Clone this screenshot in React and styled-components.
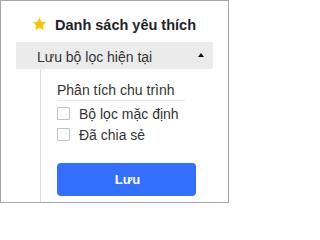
import React from "react";
import styled, { createGlobalStyle } from "styled-components";

const Global = createGlobalStyle`
  html, body { margin: 0; padding: 0; background: #fff; }
  * { box-sizing: border-box; }
`;

const Panel = styled.div`
  width: 229px;
  height: 203px;
  border: 1px solid #a6a6a6;
  background: #fff;
  font-family: "Liberation Sans", Arial, sans-serif;
  line-height: 16px;
  display: flex;
  flex-direction: column;
  overflow: hidden;
`;

const Header = styled.div`
  display: flex;
  align-items: flex-start;
  gap: 8px;
  height: 41px;
  flex-shrink: 0;
  padding: 16px 0 0 31px;
`;

const StarIcon = styled.svg`
  margin-top: 0;
  flex-shrink: 0;
`;

const Title = styled.span`
  font-size: 14.5px;
  font-weight: 700;
  color: #1f2329;
`;

const SectionBar = styled.div`
  display: flex;
  justify-content: space-between;
  align-items: flex-start;
  flex-shrink: 0;
  height: 27px;
  margin: 0 15px;
  padding: 7px 9px 0 21px;
  background: #ebebeb;
  font-size: 14px;
  color: #333;
`;

const BarLabel = styled.span`
  white-space: nowrap;
`;

const Caret = styled.span`
  margin-top: 4px;
  width: 0;
  height: 0;
  border-left: 3.5px solid transparent;
  border-right: 3.5px solid transparent;
  border-bottom: 4px solid #111;
`;

const Body = styled.div`
  flex: 1;
  margin-left: 39px;
  border-left: 1px solid #dcdcdc;
  padding-left: 16px;
  display: flex;
  flex-direction: column;
  align-items: flex-start;
`;

const GroupLabel = styled.div`
  width: 128px;
  margin-top: 13px;
  padding-bottom: 2px;
  border-bottom: 1px solid #e6e6e6;
  font-size: 14px;
  color: #333;
`;

const CheckList = styled.div`
  margin-top: 2px;
  display: flex;
  flex-direction: column;
`;

const CheckRow = styled.label`
  display: flex;
  align-items: center;
  gap: 9px;
  height: 21px;
  font-size: 14px;
  color: #333;
`;

const Box = styled.span`
  width: 13px;
  height: 13px;
  border: 1px solid #c2c2c2;
  border-radius: 1px;
  background: #fff;
`;

const SaveButton = styled.button`
  margin-top: 18px;
  width: 139px;
  height: 33px;
  padding: 0 0 0 2px;
  border: none;
  border-radius: 4px;
  background: #3370ff;
  color: #fff;
  font-family: inherit;
  font-size: 13px;
  font-weight: 700;
`;

const Star = () => (
  <StarIcon width="15" height="14" viewBox="0 0 24 23">
    <path
      d="M12 0.8l3.3 7 7.7 0.9-5.7 5.3 1.5 7.6L12 17.8l-6.8 3.8 1.5-7.6L1 8.7l7.7-0.9z"
      fill="#f7c600"
    />
  </StarIcon>
);

export default function App() {
  return (
    <>
      <Global />
      <Panel>
        <Header>
          <Star />
          <Title>Danh sách yêu thích</Title>
        </Header>
        <SectionBar>
          <BarLabel>Lưu bộ lọc hiện tại</BarLabel>
          <Caret />
        </SectionBar>
        <Body>
          <GroupLabel>Phân tích chu trình</GroupLabel>
          <CheckList>
            <CheckRow>
              <Box />
              Bộ lọc mặc định
            </CheckRow>
            <CheckRow>
              <Box />
              Đã chia sẻ
            </CheckRow>
          </CheckList>
          <SaveButton>Lưu</SaveButton>
        </Body>
      </Panel>
    </>
  );
}
